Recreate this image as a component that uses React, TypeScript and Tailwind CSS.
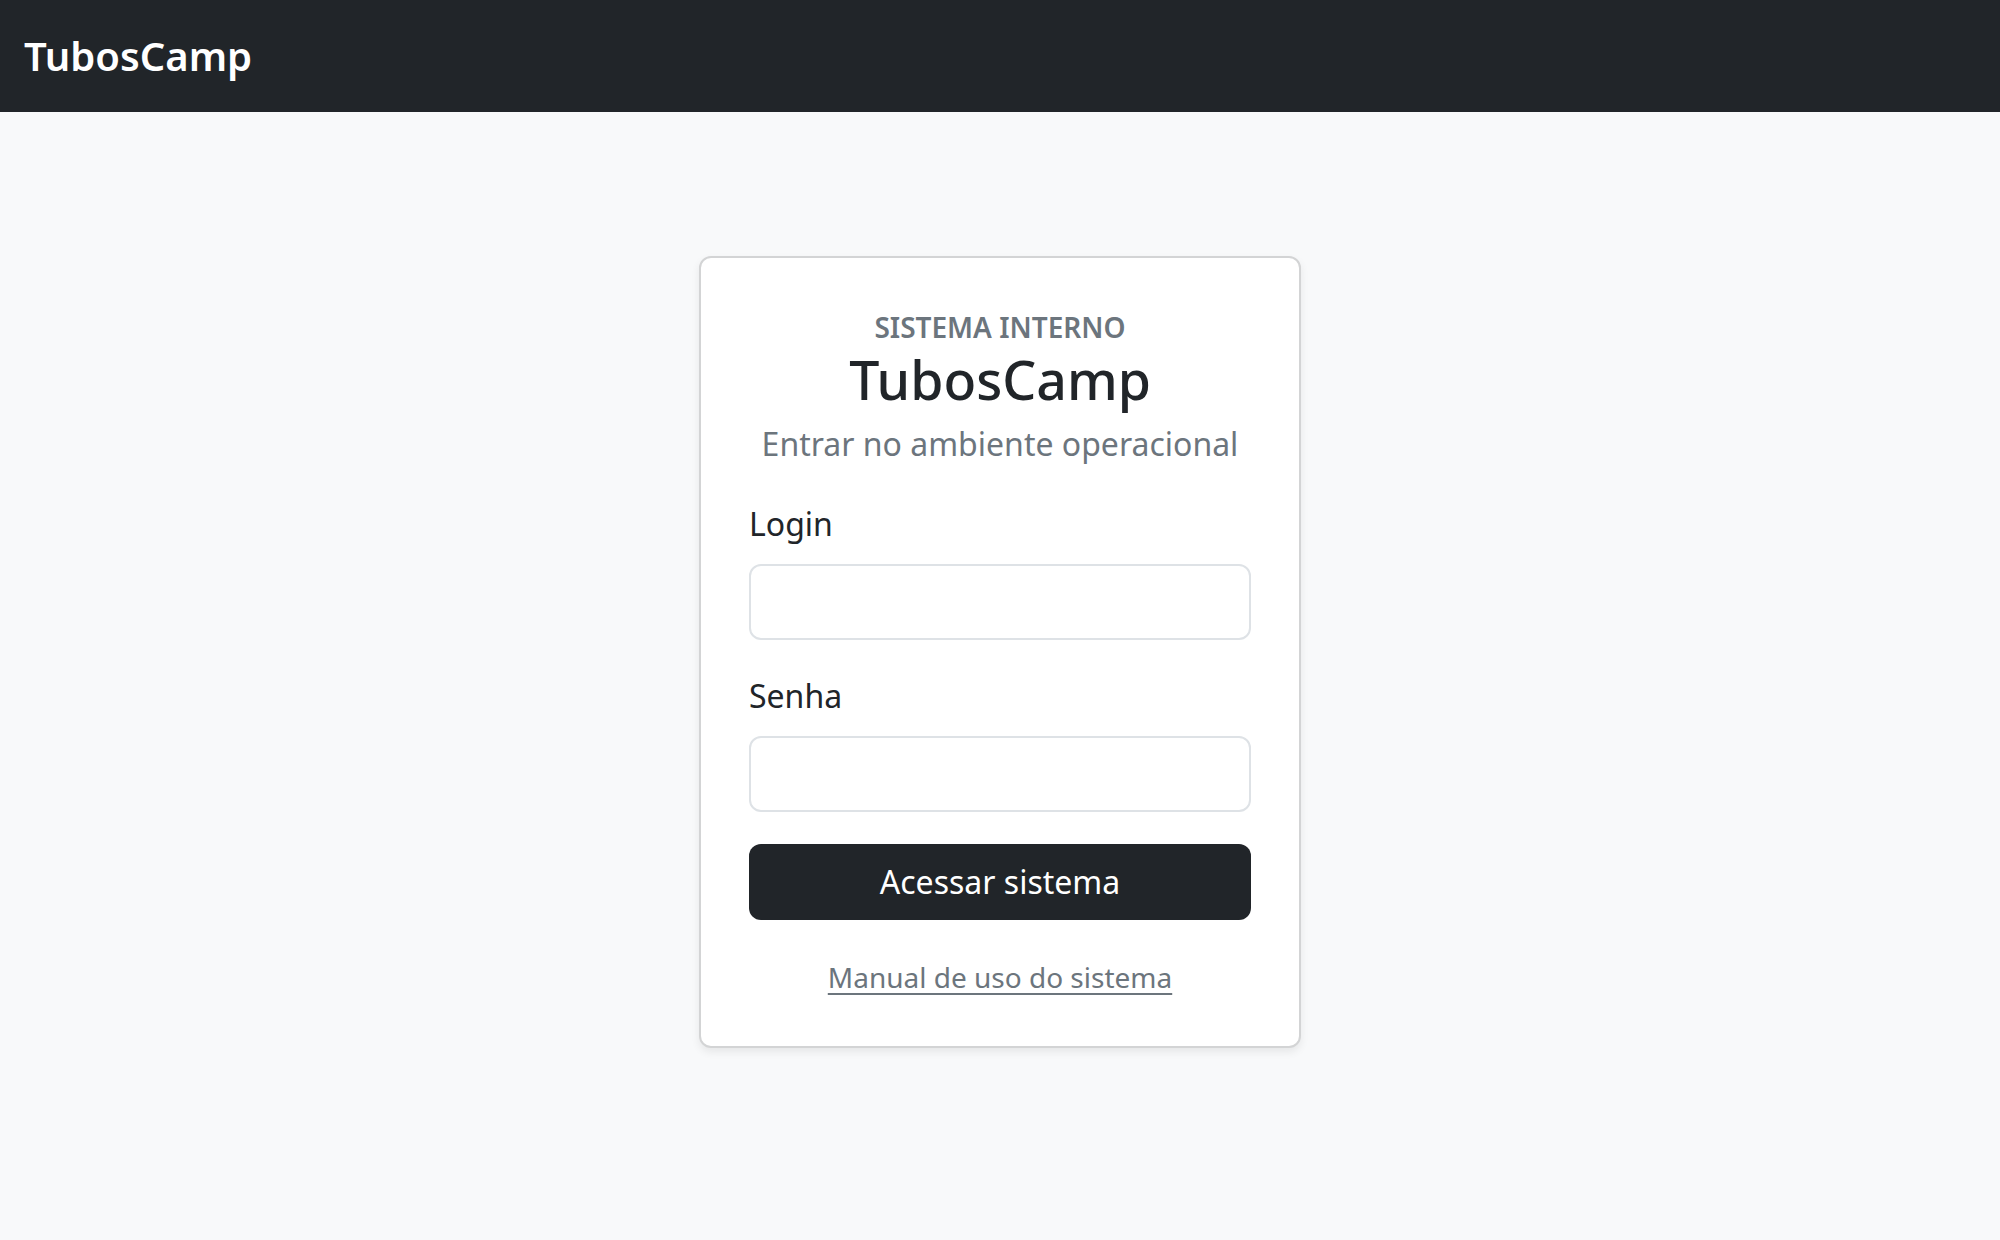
import React from "react";

export default function App() {
  return (
    <div
      className="min-h-[1240px] bg-[#f8f9fa] text-[#212529]"
      style={{ fontFamily: '"Noto Sans", "Liberation Sans", sans-serif' }}
    >
      <nav className="h-[112px] bg-[#212529] flex items-center px-[24px]">
        <span className="text-[40px] leading-[60px] font-semibold text-white">TubosCamp</span>
      </nav>
      <div className="flex justify-center pt-[144px]">
        <div className="w-[602px] bg-white border-2 border-[#d3d4d5] rounded-[12px] shadow-[0_4px_8px_rgba(0,0,0,0.075)] p-[48px]">
          <div className="text-center mb-[32px]">
            <div className="text-[28px] leading-[42px] font-semibold uppercase text-[#6c757d]">
              Sistema interno
            </div>
            <h3 className="text-[53.6px] leading-[64.3px] font-medium mb-[8px]">TubosCamp</h3>
            <p className="text-[32px] leading-[48px] text-[#6c757d]">Entrar no ambiente operacional</p>
          </div>
          <form onSubmit={(e) => e.preventDefault()}>
            <div className="mb-[32px]">
              <label className="block text-[32px] leading-[48px] mb-[16px]">Login</label>
              <input
                type="text"
                className="block w-full h-[76px] border-2 border-[#dee2e6] rounded-[12px] bg-white px-[24px] text-[32px] outline-none"
              />
            </div>
            <div className="mb-[32px]">
              <label className="block text-[32px] leading-[48px] mb-[16px]">Senha</label>
              <input
                type="password"
                className="block w-full h-[76px] border-2 border-[#dee2e6] rounded-[12px] bg-white px-[24px] text-[32px] outline-none"
              />
            </div>
            <button
              type="submit"
              className="block w-full h-[76px] bg-[#212529] text-white rounded-[12px] text-[32px] leading-[48px]"
            >
              Acessar sistema
            </button>
          </form>
          <div className="text-center mt-[36px]">
            <a href="#" className="text-[28px] leading-[42px] text-[#6c757d] underline underline-offset-[5px] decoration-[2px]">
              Manual de uso do sistema
            </a>
          </div>
        </div>
      </div>
    </div>
  );
}
